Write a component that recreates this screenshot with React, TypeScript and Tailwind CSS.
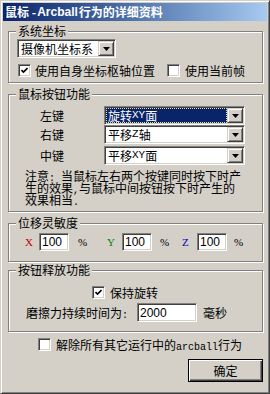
const sunken =
  "bg-white border border-t-[#808080] border-l-[#808080] border-b-white border-r-white shadow-[inset_1px_1px_0_#404040,inset_-1px_-1px_0_#d4d0c8]";
const raised =
  "bg-[#d4d0c8] border border-t-[#d4d0c8] border-l-[#d4d0c8] border-b-[#404040] border-r-[#404040] shadow-[inset_1px_1px_0_#fff,inset_-1px_-1px_0_#808080]";

function Mono({ children, className = "" }: { children: React.ReactNode; className?: string }) {
  return (
    <span className={`font-['Liberation_Mono',monospace] text-[10px] leading-none ${className}`}>{children}</span>
  );
}

function Checkbox({ checked = false }: { checked?: boolean }) {
  return (
    <div className={`w-[13px] h-[13px] shrink-0 flex items-center justify-center ${sunken}`}>
      {checked && (
        <svg width="7" height="7" viewBox="0 0 7 7">
          <path d="M0.5 3 L2.5 5 L6.5 1" fill="none" stroke="#000" strokeWidth="1.6" />
        </svg>
      )}
    </div>
  );
}

function Arrow() {
  return (
    <svg width="7" height="4" viewBox="0 0 7 4">
      <polygon points="0,0 7,0 3.5,4" fill="#000" />
    </svg>
  );
}

function Select({
  width,
  children,
  focused = false,
}: {
  width: string;
  children: React.ReactNode;
  focused?: boolean;
}) {
  return (
    <div className={`${width} h-[19px] p-[1px] flex ${sunken}`}>
      {focused ? (
        <div className="flex-1 flex items-center pl-[1px] bg-[#0a246a] text-white border border-dotted border-[#e8d890]">
          {children}
        </div>
      ) : (
        <div className="flex-1 flex items-center pl-[2px]">{children}</div>
      )}
      <div className={`w-[16px] h-full flex items-center justify-center ${raised}`}>
        <Arrow />
      </div>
    </div>
  );
}

function Group({
  label,
  className = "",
  children,
}: {
  label: string;
  className?: string;
  children: React.ReactNode;
}) {
  return (
    <fieldset className={`border border-[#808080] shadow-[inset_1px_1px_0_#fff,1px_1px_0_#fff] ${className}`}>
      <legend className="ml-[7px] px-[2px] h-[12px] bg-[#d4d0c8] leading-[12px]">{label}</legend>
      {children}
    </fieldset>
  );
}

function Field({ width, value, className = "" }: { width: string; value: string; className?: string }) {
  return (
    <div
      className={`${width} h-[18px] shrink-0 flex items-center pl-[2px] font-['Liberation_Sans',sans-serif] text-[12px] ${sunken} ${className}`}
    >
      {value}
    </div>
  );
}

function Axis({ letter, color, width }: { letter: string; color: string; width: string }) {
  return (
    <span className={`${width} shrink-0 font-['Liberation_Serif',serif] text-[11px] ${color}`}>{letter}</span>
  );
}

function Pct({ width = "", className = "" }: { width?: string; className?: string }) {
  return (
    <span className={`${width} shrink-0 font-['Liberation_Serif',serif] text-[11px] ${className}`}>%</span>
  );
}

export default function App() {
  return (
    <div className="w-[270px] h-[394px] bg-[#d4d0c8] border border-t-[#d4d0c8] border-l-[#d4d0c8] border-r-[#404040] border-b-[#404040] shadow-[inset_1px_1px_0_#fff,inset_-1px_-1px_0_#808080] p-[2px] flex flex-col text-[12px] leading-[12px] text-black font-['Noto_Sans_CJK_SC',sans-serif] overflow-hidden">
      <div className="h-[18px] shrink-0 flex items-center pl-[2px] bg-linear-to-r from-[#0a246a] to-[#a6caf0] text-white font-bold">
        鼠标 - <span className="font-['Liberation_Sans',sans-serif] mx-[1px]">Arcball</span>行为的详细资料
      </div>

      <div className="flex flex-col pl-[5px] pr-[4px]">
        <Group label="系统坐标" className="mt-[4px]">
          <div className="pt-[2px] pl-[8px] pb-[5px]">
            <Select width="w-[99px]">摄像机坐标系</Select>
            <div className="mt-[6px] h-[13px] flex items-center pl-[1px]">
              <div className="w-[149px] flex items-center">
                <Checkbox checked />
                <span className="ml-[4px]">使用自身坐标枢轴位置</span>
              </div>
              <Checkbox />
              <span className="ml-[5px]">使用当前帧</span>
            </div>
          </div>
        </Group>

        <Group label="鼠标按钮功能" className="mt-[5px]">
          <div className="pt-[6px] pb-[5px]">
            <div className="h-[19px] flex items-center pl-[31px]">
              <span className="w-[64px]">左键</span>
              <Select width="w-[141px]" focused>
                旋转<Mono className="text-[11px]">XY</Mono>面
              </Select>
            </div>
            <div className="h-[19px] flex items-center pl-[31px]">
              <span className="w-[64px]">右键</span>
              <Select width="w-[141px]">
                平移<Mono className="text-[11px]">Z</Mono>轴
              </Select>
            </div>
            <div className="mt-[2px] h-[19px] flex items-center pl-[31px]">
              <span className="w-[64px]">中键</span>
              <Select width="w-[141px]">
                平移<Mono className="text-[11px]">XY</Mono>面
              </Select>
            </div>
            <div className="mt-[5px] pl-[16px] whitespace-nowrap">
              <div className="h-[12px]">
                注意<Mono>: </Mono>当鼠标左右两个按键同时按下时产
              </div>
              <div className="h-[12px]">
                生的效果<Mono>,</Mono>与鼠标中间按钮按下时产生的
              </div>
              <div className="h-[12px]">
                效果相当<Mono>.</Mono>
              </div>
            </div>
          </div>
        </Group>

        <Group label="位移灵敏度" className="mt-[5px]">
          <div className="pt-[4px] pb-[10px] pl-[16px] flex items-center h-[32px]">
            <Axis letter="X" color="text-[#c00000]" width="w-[14px]" />
            <Field width="w-[30px]" value="100" />
            <Pct width="w-[29px]" className="ml-[9px]" />
            <Axis letter="Y" color="text-[#008000]" width="w-[15px]" />
            <Field width="w-[30px]" value="100" />
            <Pct width="w-[22px]" className="ml-[8px]" />
            <Axis letter="Z" color="text-[#0000c0]" width="w-[15px]" />
            <Field width="w-[30px]" value="100" />
            <Pct className="ml-[7px]" />
          </div>
        </Group>

        <Group label="按钮释放功能" className="mt-[2px]">
          <div className="pt-[10px] pb-[9px]">
            <div className="h-[13px] flex items-center pl-[83px]">
              <Checkbox checked />
              <span className="ml-[5px]">保持旋转</span>
            </div>
            <div className="mt-[4px] h-[19px] flex items-center pl-[17px]">
              <span className="w-[111px] h-[12px]">
                磨擦力持续时间为<Mono>:</Mono>
              </span>
              <div
                className={`w-[60px] h-[19px] flex items-center pl-[2px] font-['Liberation_Sans',sans-serif] ${sunken}`}
              >
                2000
              </div>
              <span className="ml-[6px]">毫秒</span>
            </div>
          </div>
        </Group>

        <div className="mt-[6px] h-[13px] flex items-center pl-[30px]">
          <Checkbox />
          <span className="ml-[5px] h-[12px] whitespace-nowrap">
            解除所有其它运行中的<Mono>arcball</Mono>行为
          </span>
        </div>

        <div className="mt-[8px] self-end w-[75px] h-[23px] flex items-center justify-center border border-black bg-[#d4d0c8] shadow-[inset_1px_1px_0_#fff,inset_-1px_-1px_0_#404040,inset_-2px_-2px_0_#808080]">
          确定
        </div>
      </div>
    </div>
  );
}
